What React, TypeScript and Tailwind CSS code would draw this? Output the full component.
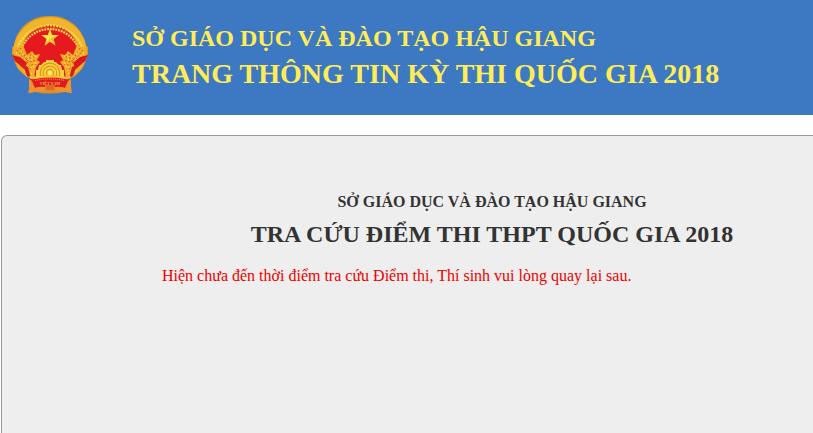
/** National emblem: rice wreath, star, cogwheel and the ribbon underneath. */
function Emblem() {
  return (
    <svg viewBox="10 14 80 82" className="h-[82px] w-20 shrink-0" role="img" aria-label="Quốc huy Việt Nam">
      <path
        d="M50 16C68 15 84 29 86 46L88 47V54L86 60C84 68 78 75 70 79L72 93L65 92Q50 95 35 92L28 93L31 79C22 75 16 68 14 60L12 54V47L14 46C16 28 32 15 50 16Z"
        fill="#dd8f22"
      />
      <circle cx="50" cy="52" r="28" fill="#e6191f" />

      {/* rice wreath */}
      <g fill="none">
        <path d="M17 54A33 33 0 0 1 83 54" stroke="#efb52b" strokeWidth="8" />
        <path d="M16 54A34.5 34.5 0 0 1 84 54" stroke="#fbdc50" strokeWidth="2" strokeDasharray="2.3 0.9" />
        <path d="M20 54A30.5 30.5 0 0 1 80 54" stroke="#fbdc50" strokeWidth="2.2" strokeDasharray="1.9 0.9" />
        <path d="M18 54A32.5 32.5 0 0 1 82 54" stroke="#d8951e" strokeWidth="0.7" strokeDasharray="1.5 1" />
      </g>

      {/* loose grains at both sides */}
      <path
        d="M14 48L23 45L27 55L32 51L35 55L40 54L37 60L40 62L36 67L34 77L27 77L18 68L14 58ZM86 48L77 45L73 55L68 51L65 55L60 54L63 60L60 62L64 67L66 77L73 77L82 68L86 58Z"
        fill="#f0ad28"
      />
      <g fill="none" stroke="#d9371f" strokeWidth="0.9" strokeDasharray="1.7 1.8">
        <path d="M17 50L25 60L36 56M20 48L29 62L38 60M24 55L31 70M28 66L36 64M31 54L28 61" />
        <path d="M83 50L75 60L64 56M80 48L71 62L62 60M76 55L69 70M72 66L64 64M69 54L72 61" />
      </g>
      <g fill="none" stroke="#ffe05a" strokeWidth="1.3" strokeDasharray="1.5 1.9">
        <path d="M16 53L23 59L33 60M21 51L27 58L37 56M25 63L32 68L36 62M24 71L32 74" />
        <path d="M84 53L77 59L67 60M79 51L73 58L63 56M75 63L68 68L64 62M76 71L68 74" />
      </g>

      {/* red bands across the grains */}
      <path d="M12 55L20 57L27 63L24 69L15 61ZM88 55L80 57L73 63L76 69L85 61Z" fill="#e0161f" />
      <path d="M14 60L24 68L27 76L31 78L28 67ZM86 60L76 68L73 76L69 78L72 67Z" fill="#d91e1e" />

      <path
        d="M50 28.7L52.1 35L58.8 35L53.5 39L55.4 45.5L50 41.7L44.6 45.5L46.5 39L41.2 35L47.9 35Z"
        fill="#ffe348"
      />
      <path d="M50 38.5L55.4 45.5L53.5 39L58.8 35ZM50 38.5L44.6 45.5L50 41.7Z" fill="#f7b72e" />

      {/* cogwheel */}
      <path d="M36 77V70H38L39 65H41L44 62H46V60H54V62H56L59 65H61L62 70H64V77Z" fill="#fad13c" />
      <g fill="none" stroke="#df941d" strokeWidth="1.2">
        <circle cx="50" cy="73" r="9.8" />
        <circle cx="50" cy="73" r="6.8" />
        <circle cx="50" cy="73" r="3.6" />
      </g>
      <circle cx="50" cy="73" r="2" fill="#ffef65" />

      {/* ribbon */}
      <path d="M33 78Q50 75 67 78L70 79L66 88Q50 86 34 88L30 79Z" fill="#df1a20" />
      <path d="M30 76Q31 79 35 78Q50 75 65 78Q69 79 70 76" fill="none" stroke="#fbc53b" strokeWidth="1.8" />
      <path d="M29 79L32 81L35 88L34 92L29 93ZM71 79L68 81L65 88L66 92L71 93Z" fill="#ed9430" />
      <path d="M35 88Q40 86 45 87V91L34 92ZM65 88Q60 86 55 87V91L66 92Z" fill="#ef922c" />
      <rect x="45" y="85" width="10" height="5" fill="#e97a29" />
      <path d="M47 85V90M49 85V90M51 85V90M53 85V90" stroke="#d5491f" strokeWidth="0.7" />
      <path d="M35 80.5Q50 77.5 65 80.5" fill="none" stroke="#f6a23a" strokeWidth="1" strokeDasharray="1.2 0.8" />
      <text
        x="50"
        y="84.5"
        fill="#f7b241"
        textAnchor="middle"
        fontSize="4"
        fontWeight="bold"
        fontFamily="Liberation Serif, serif"
      >
        VIỆT NAM
      </text>
    </svg>
  )
}

export default function App() {
  return (
    <div className="flex min-h-screen flex-col gap-5 overflow-hidden bg-white font-['Liberation_Serif','Times_New_Roman',serif]">
      <header className="flex gap-[42px] bg-[#3d79c2] pt-3.5 pb-[19px] pl-2.5 text-[#ffec57]">
        <Emblem />
        <div className="pt-1.5 font-bold whitespace-nowrap">
          <p className="text-[24px] leading-9">SỞ GIÁO DỤC VÀ ĐÀO TẠO HẬU GIANG</p>
          <h1 className="text-[28px] leading-9">TRANG THÔNG TIN KỲ THI QUỐC GIA 2018</h1>
        </div>
      </header>

      {/* wider than small windows on purpose, the right side is cut off there */}
      <main className="ml-px min-w-[982px] grow rounded-t-md border border-b-0 border-[#999] bg-[#eee] pt-[50px] text-[#333]">
        <div className="text-center font-bold">
          <p className="text-[16px] leading-8">SỞ GIÁO DỤC VÀ ĐÀO TẠO HẬU GIANG</p>
          <h2 className="text-[24px] leading-8">TRA CỨU ĐIỂM THI THPT QUỐC GIA 2018</h2>
        </div>
        <p className="mt-3.5 px-40 text-[16px] leading-6 text-[#e00]">
          Hiện chưa đến thời điểm tra cứu Điểm thi, Thí sinh vui lòng quay lại sau.
        </p>
      </main>
    </div>
  )
}
